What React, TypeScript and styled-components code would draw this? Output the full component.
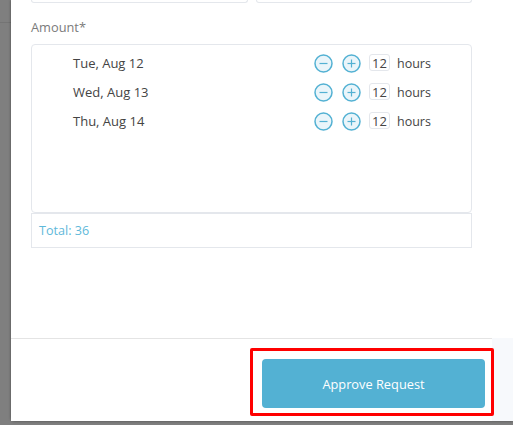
import styled, { createGlobalStyle } from "styled-components"

const GlobalStyle = createGlobalStyle`
  html, body {
    margin: 0;
    padding: 0;
    background: #7f7f7f;
  }
  body {
    font-family: "Open Sans", "Noto Sans", sans-serif;
  }
`

const rows = [
  { date: "Tue, Aug 12", hours: 12 },
  { date: "Wed, Aug 13", hours: 12 },
  { date: "Thu, Aug 14", hours: 12 },
]

const Page = styled.div`
  width: 513px;
  height: 425px;
  overflow: hidden;
  padding-bottom: 4px;
  box-sizing: border-box;
  background: #7f7f7f;
  display: flex;
`

const Backdrop = styled.div`
  width: 11px;
  height: 23px;
  box-sizing: border-box;
  border-bottom: 1px solid #747474;
`

const Modal = styled.div`
  width: 502px;
  height: 421px;
  display: flex;
  flex-direction: column;
  background: white;
  border-bottom-left-radius: 4px;
  box-shadow: 0 0 3px rgba(0, 0, 0, 0.45);
`

const Body = styled.div`
  flex: 1;
  padding: 0 41px 0 20px;
`

const TopFields = styled.div`
  display: flex;
  gap: 8px;
  height: 3px;
  margin-bottom: 17px;
`

const TopField = styled.div`
  flex: 1;
  border: 1px solid #e4e7ec;
  border-top: 0;
  border-radius: 0 0 4px 4px;
`

const Label = styled.div`
  font-size: 12.8px;
  line-height: 14px;
  color: #7b7b7b;
  margin-bottom: 10px;
`

const DayList = styled.div`
  height: 169px;
  box-sizing: border-box;
  border: 1px solid #e4e7ec;
  border-radius: 4px;
  padding: 3px 0 0 41px;
`

const DayRow = styled.div`
  display: flex;
  align-items: center;
  height: 29px;
  font-size: 13px;
  color: #444;
`

const DayName = styled.span`
  width: 241px;
`

const RoundButton = styled.button`
  width: 19px;
  height: 19px;
  padding: 0;
  margin: 2px 9px 0 0;
  border: 0;
  background: none;
  display: block;
`

const HoursBox = styled.span`
  width: 21px;
  height: 17px;
  box-sizing: border-box;
  border: 1px solid #e4e7ec;
  border-radius: 3px;
  display: flex;
  align-items: center;
  justify-content: center;
  font-size: 13px;
  margin-left: -1px;
  margin-right: 7px;
`

const HoursLabel = styled.span`
  font-size: 12.5px;
  margin-top: 1px;
`

const TotalBar = styled.div`
  height: 35px;
  box-sizing: border-box;
  border: 1px solid #e4e7ec;
  padding-left: 7px;
  display: flex;
  align-items: center;
  font-size: 12.6px;
  color: #5fb9da;
`

const Footer = styled.div`
  height: 83px;
  background: #f7f9fc;
`

const FooterMain = styled.div`
  width: 481px;
  height: 83px;
  box-sizing: border-box;
  background: white;
  border-top: 1px solid #e4e4e4;
  display: flex;
  align-items: flex-start;
  justify-content: flex-end;
  padding: 20px 7px 0 0;
`

const ApproveButton = styled.button`
  width: 223px;
  height: 49px;
  padding: 1px 0 0;
  border: 0;
  border-radius: 4px;
  background: #53b1d3;
  color: white;
  font-family: inherit;
  font-size: 12.8px;
`

const Highlight = styled.div`
  position: absolute;
  left: 250px;
  top: 348px;
  width: 244px;
  height: 68px;
  box-sizing: border-box;
  border: 3px solid #f00;
  border-radius: 2px;
`

const StepIcon = ({ plus }: { plus?: boolean }) => (
  <svg width="19" height="19" viewBox="0 0 19 19" fill="none">
    <circle cx="9.5" cy="9.5" r="8.5" fill="#eaf5fa" stroke="#53b1d3" strokeWidth="1.5" />
    <path d="M5.5 9.5h8" stroke="#53b1d3" strokeWidth="1.2" />
    {plus && <path d="M9.5 5.5v8" stroke="#53b1d3" strokeWidth="1.2" />}
  </svg>
)

const App = () => (
  <>
    <GlobalStyle />
    <Page>
      <Backdrop />
      <Modal>
        <Body>
          <TopFields>
            <TopField />
            <TopField />
          </TopFields>
          <Label>Amount*</Label>
          <DayList>
            {rows.map((row) => (
              <DayRow key={row.date}>
                <DayName>{row.date}</DayName>
                <RoundButton aria-label="Decrease">
                  <StepIcon />
                </RoundButton>
                <RoundButton aria-label="Increase">
                  <StepIcon plus />
                </RoundButton>
                <HoursBox>{row.hours}</HoursBox>
                <HoursLabel>hours</HoursLabel>
              </DayRow>
            ))}
          </DayList>
          <TotalBar>Total: 36</TotalBar>
        </Body>
        <Footer>
          <FooterMain>
            <ApproveButton>Approve Request</ApproveButton>
          </FooterMain>
        </Footer>
      </Modal>
      <Highlight />
    </Page>
  </>
)

export default App
